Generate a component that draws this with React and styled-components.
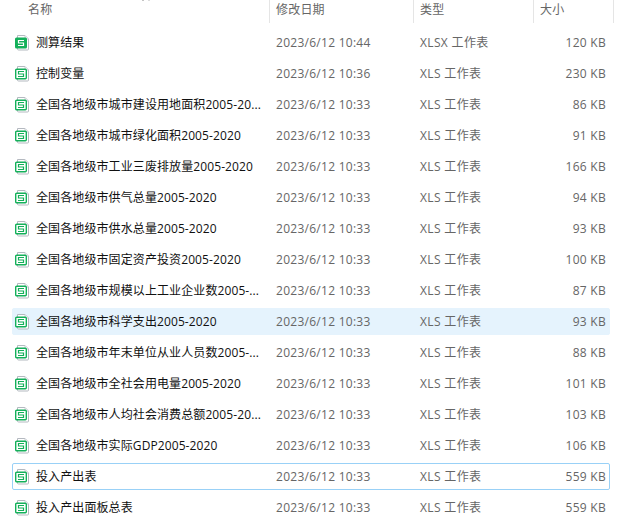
import React from "react";
import styled, { createGlobalStyle } from "styled-components";

const GlobalStyle = createGlobalStyle`
  html, body {
    margin: 0;
    background: #fff;
  }
  body {
    font-family: "Open Sans", "Noto Sans CJK SC", sans-serif;
    font-size: 12px;
    overflow: hidden;
  }
`;

const Page = styled.div`
  width: 623px;
  height: 527px;
  overflow: hidden;
`;

const Header = styled.div`
  display: grid;
  grid-template-columns: 270px 144px 120px 80px;
  height: 23px;
  margin-bottom: 4px;
  color: #666;
`;

const HeaderCell = styled.div`
  position: relative;
  padding-left: ${(props) => props.$indent}px;
  padding-top: 1px;
  line-height: 18px;
  letter-spacing: 0.2px;
  border-right: 1px solid #e5e5e5;
  box-sizing: border-box;
`;

const SortMark = styled.svg`
  position: absolute;
  left: 141px;
  top: 0;
`;

const List = styled.div`
  display: flex;
  flex-direction: column;
  gap: 4px;
  padding: 2px 0 0 12px;
  width: 598px;
`;

const Row = styled.div`
  display: grid;
  grid-template-columns: 23px 240px 144px 118px 68px;
  align-items: center;
  height: 27px;
  box-sizing: border-box;
  border-radius: 2px;
  border: 1px solid ${(props) => (props.$focused ? "#99d1f7" : props.$selected ? "#e5f3fd" : "transparent")};
  background: ${(props) => (props.$selected ? "#e5f3fd" : "transparent")};
`;

const IconWrap = styled.div`
  display: flex;
  padding-left: 2px;
`;

const Name = styled.div`
  color: #111;
  padding-bottom: 2px;
  letter-spacing: 0.1px;
  white-space: nowrap;
  overflow: hidden;
`;

const Meta = styled.div`
  color: #666;
  letter-spacing: 0.27px;
  white-space: nowrap;
`;

const FileType = styled(Meta)`
  padding-bottom: 2px;
  letter-spacing: 0.35px;
`;

const Size = styled(Meta)`
  text-align: right;
`;

function SheetIcon({ solid }) {
  return (
    <svg width="16" height="17" viewBox="0 0 16 17">
      <path d="M2.500 1.500h7.500l3.500 3.500v10a1 1 0 0 1-1 1H3.500a1 1 0 0 1-1-1z" fill="#fff" stroke="#b4b9c0" />
      <path d="M10 1.500v3.500h3.500" fill="#eef0f2" stroke="#ccd0d5" />
      {solid ? (
        <rect x="0" y="3.500" width="12" height="11" rx="1.500" fill="#14b05a" />
      ) : (
        <rect x="0.700" y="4.200" width="10.600" height="9.600" rx="1" fill="#fff" stroke="#14b05a" strokeWidth="1.400" />
      )}
      <path d="M9 6.500H3.500v2.500H8.500v2.500H3" fill="none" stroke={solid ? "#fff" : "#14b05a"} strokeWidth="1.200" />
    </svg>
  );
}

const files = [
  ["测算结果", "2023/6/12 10:44", "XLSX 工作表", "120 KB"],
  ["控制变量", "2023/6/12 10:36", "XLS 工作表", "230 KB"],
  ["全国各地级市城市建设用地面积2005-20...", "2023/6/12 10:33", "XLS 工作表", "86 KB"],
  ["全国各地级市城市绿化面积2005-2020", "2023/6/12 10:33", "XLS 工作表", "91 KB"],
  ["全国各地级市工业三废排放量2005-2020", "2023/6/12 10:33", "XLS 工作表", "166 KB"],
  ["全国各地级市供气总量2005-2020", "2023/6/12 10:33", "XLS 工作表", "94 KB"],
  ["全国各地级市供水总量2005-2020", "2023/6/12 10:33", "XLS 工作表", "93 KB"],
  ["全国各地级市固定资产投资2005-2020", "2023/6/12 10:33", "XLS 工作表", "100 KB"],
  ["全国各地级市规模以上工业企业数2005-...", "2023/6/12 10:33", "XLS 工作表", "87 KB"],
  ["全国各地级市科学支出2005-2020", "2023/6/12 10:33", "XLS 工作表", "93 KB"],
  ["全国各地级市年末单位从业人员数2005-...", "2023/6/12 10:33", "XLS 工作表", "88 KB"],
  ["全国各地级市全社会用电量2005-2020", "2023/6/12 10:33", "XLS 工作表", "101 KB"],
  ["全国各地级市人均社会消费总额2005-20...", "2023/6/12 10:33", "XLS 工作表", "103 KB"],
  ["全国各地级市实际GDP2005-2020", "2023/6/12 10:33", "XLS 工作表", "106 KB"],
  ["投入产出表", "2023/6/12 10:33", "XLS 工作表", "559 KB"],
  ["投入产出面板总表", "2023/6/12 10:33", "XLS 工作表", "559 KB"],
];

export default function App() {
  return (
    <Page>
      <GlobalStyle />
      <Header>
        <HeaderCell $indent={28}>
          名称
          <SortMark width="10" height="2" viewBox="0 0 10 2">
            <rect x="1" y="0" width="2" height="1" fill="#c4c4c4" />
            <rect x="7" y="0" width="2" height="1" fill="#dcdcdc" />
          </SortMark>
        </HeaderCell>
        <HeaderCell $indent={6}>修改日期</HeaderCell>
        <HeaderCell $indent={6}>类型</HeaderCell>
        <HeaderCell $indent={6}>大小</HeaderCell>
      </Header>
      <List>
        {files.map((file, i) => (
          <Row key={i} $selected={i === 9} $focused={i === 14}>
            <IconWrap>
              <SheetIcon solid={i === 0} />
            </IconWrap>
            <Name>{file[0]}</Name>
            <Meta>{file[1]}</Meta>
            <FileType>{file[2]}</FileType>
            <Size>{file[3]}</Size>
          </Row>
        ))}
      </List>
    </Page>
  );
}
